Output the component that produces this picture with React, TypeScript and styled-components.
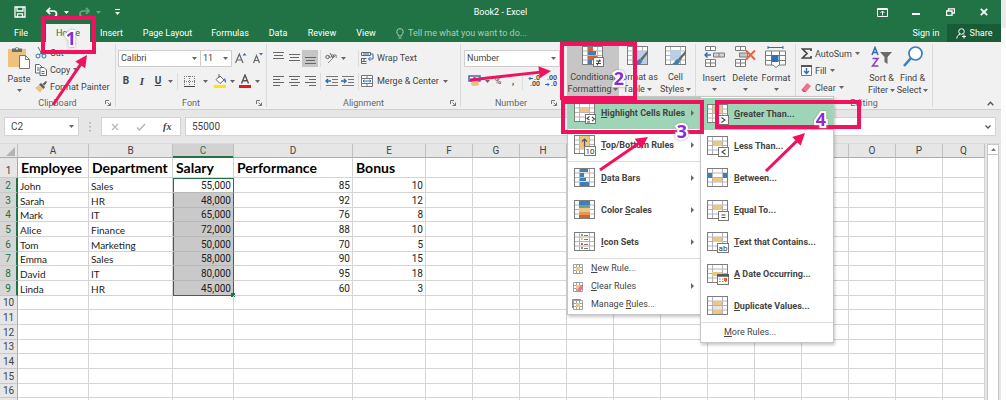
import React from "react";
import styled, { createGlobalStyle, css } from "styled-components";

const GREEN = "#217346";
const PINK = "#f0125f";
const UI_FONT = 'Roboto, "Noto Sans", sans-serif';
const TEXT_FONT = 'Lato, "Open Sans", sans-serif';

const GlobalStyle = createGlobalStyle`
  *, *::before, *::after { box-sizing: border-box; }
  body { margin: 0; overflow: hidden; background: #fafafa; font-family: ${UI_FONT}; font-size: 9px; color: #444; }
  button, input, select { font: inherit; color: inherit; margin: 0; padding: 0; border: 0; background: none; border-radius: 0; }
  svg { display: block; flex: none; }
`;

/* ---------- window frame ---------- */

const Screen = styled.div`
  position: relative;
  height: 100vh;
  padding-right: 5px;
  overflow: hidden;
  background: linear-gradient(#e9ebec 28px, #fdfdfd 28px);
`;

const Window = styled.div`
  height: 100%;
  display: flex;
  flex-direction: column;
  background: #e6e6e6;
`;

const TitleBar = styled.header`
  height: 24px;
  flex: none;
  display: grid;
  grid-template-columns: 1fr auto 1fr;
  align-items: center;
  background: ${GREEN};
  color: #fff;
`;

const QuickAccess = styled.div`
  display: flex;
  align-items: center;
  padding-left: 14px;
`;

const QuickButton = styled.button<{ $dim?: boolean }>`
  width: 32px;
  height: 18px;
  display: flex;
  align-items: center;
  gap: 6px;
  opacity: ${(p) => (p.$dim ? 0.35 : 1)};
`;

const TitleButton = styled.button<{ $w: number }>`
  width: ${(p) => p.$w}px;
  height: 18px;
  display: flex;
  align-items: center;
  justify-content: center;
`;

const WindowButtons = styled.div`
  display: flex;
  justify-content: flex-end;
`;

const TabBar = styled.nav`
  height: 18px;
  flex: none;
  display: flex;
  align-items: stretch;
  background: ${GREEN};
  color: #fff;
`;

const Tab = styled.button<{ $w: number; $active?: boolean }>`
  width: ${(p) => p.$w}px;
  white-space: nowrap;
  text-align: center;
  color: ${(p) => (p.$active ? GREEN : "#fff")};
  background: ${(p) => (p.$active ? "#f1f1f1" : "transparent")};
`;

const FileTab = styled(Tab)`
  padding-right: 4px;
`;

const TellMe = styled.label`
  flex: 1;
  display: flex;
  align-items: center;
  gap: 4px;
  padding-left: 10px;
  color: #a9cdb8;
  input { width: 140px; }
  input::placeholder { color: #a9cdb8; opacity: 1; }
`;

const SignIn = styled.button`
  width: 42px;
`;

const Share = styled.button`
  width: 54px;
  display: flex;
  align-items: center;
  justify-content: center;
  gap: 3px;
  background: #185c37;
`;

/* ---------- ribbon ---------- */

const Ribbon = styled.section`
  flex: none;
  display: flex;
  background: #f1f1f1;
  border-bottom: 1px solid #cfcfcf;
`;

const GroupBox = styled.div<{ $w: number }>`
  width: ${(p) => p.$w}px;
  flex: none;
  border-right: 1px solid #dadada;
  margin: 2px 0;
  display: flex;
  flex-direction: column;
`;

const GroupBody = styled.div<{ $pad: number }>`
  height: 53px;
  padding-left: ${(p) => p.$pad}px;
  display: flex;
`;

const GroupFooter = styled.div`
  height: 10px;
  display: grid;
  grid-template-columns: 10px 1fr 10px;
  align-items: center;
  line-height: 12px;
  text-align: center;
  color: #666;
`;

const Launcher = styled.button`
  grid-column: 3;
  width: 7px;
  height: 8px;
  color: #777;
`;

const Rows = styled.div`
  display: flex;
  flex-direction: column;
  gap: 5px;
  padding-top: 5px;
`;

const ToolRow = styled.div`
  display: flex;
  align-items: center;
  height: 18px;
`;

const Tool = styled.button<{ $w?: number; $on?: boolean }>`
  width: ${(p) => p.$w ?? 16}px;
  height: 17px;
  flex: none;
  display: flex;
  align-items: center;
  justify-content: center;
  background: ${(p) => (p.$on ? "#c6c6c6" : "transparent")};
`;

const TextTool = styled.button`
  height: 17px;
  display: flex;
  align-items: center;
  gap: 3px;
  white-space: nowrap;
`;

const Rule = styled.span`
  width: 1px;
  height: 17px;
  margin: 0 2px;
  background: #dcdcdc;
`;

const Cluster = styled.div<{ $w: number }>`
  width: ${(p) => p.$w}px;
  display: flex;
  align-items: center;
`;

const Letter = styled.span<{ $kind: "b" | "i" | "u" }>`
  font-size: 10px;
  line-height: 12px;
  font-weight: 700;
  ${(p) => p.$kind === "i" && css`font-style: italic; font-family: "Liberation Serif", serif; font-size: 11px;`}
  ${(p) => p.$kind === "u" && css`text-decoration: underline;`}
`;

const SelectBox = styled.label<{ $w: number }>`
  width: ${(p) => p.$w}px;
  height: 17px;
  display: flex;
  align-items: center;
  padding-right: 3px;
  background: #fff;
  border: 1px solid #cdcdcd;
  & + & { margin-left: -1px; }
  select { appearance: none; flex: 1; min-width: 0; height: 15px; padding-left: 2px; outline: none; }
`;

const SmallList = styled.div`
  display: flex;
  flex-direction: column;
  button { height: 17px; }
`;

const BigTool = styled.button<{ $w: number; $on?: boolean }>`
  width: ${(p) => p.$w}px;
  height: 53px;
  flex: none;
  display: flex;
  flex-direction: column;
  align-items: center;
  padding-top: 2px;
  line-height: 12px;
  white-space: nowrap;
  background: ${(p) => (p.$on ? "#c6c6c6" : "transparent")};
  svg { margin-bottom: 4px; }
  svg.caret { margin: 4px 0 0; }
`;

const Line = styled.span`
  display: flex;
  align-items: center;
  gap: 2px;
  svg.caret { margin: 0; }
`;

const Collapse = styled.button`
  align-self: flex-end;
  margin: 0 7px 3px auto;
`;

/* ---------- drop-down menus ---------- */

const MenuAnchor = styled.div`
  position: relative;
`;

const Menu = styled.ul<{ $w: number }>`
  position: absolute;
  z-index: 5;
  top: calc(100% - 1px);
  left: 0;
  width: ${(p) => p.$w}px;
  margin: 0;
  padding: 0 0 1px;
  list-style: none;
  background: #fff;
  border: 1px solid #c6c6c6;
  box-shadow: 1px 2px 3px rgba(0, 0, 0, 0.22);
  & & { top: -1px; left: 100%; padding-top: 1px; z-index: 6; }
`;

const MenuItem = styled.li<{ $divided?: boolean }>`
  position: relative;
  border-top: ${(p) => (p.$divided ? "1px solid #dcdcdc" : "0")};
`;

const MenuButton = styled.button<{ $size: "large" | "small"; $on?: boolean }>`
  width: 100%;
  height: ${(p) => (p.$size === "large" ? 32 : 18)}px;
  display: flex;
  align-items: center;
  padding: 0 6px 0 ${(p) => (p.$size === "large" ? 6 : 4)}px;
  gap: ${(p) => (p.$size === "large" ? 5 : 8)}px;
  font-weight: ${(p) => (p.$size === "large" ? 700 : 400)};
  text-align: left;
  white-space: nowrap;
  background: ${(p) => (p.$on ? "#9fd5b7" : "transparent")};
  span { flex: 1; }
`;

const IconSlot = styled.i`
  width: 11px;
  flex: none;
`;

/* ---------- formula bar ---------- */

const FormulaBar = styled.div`
  flex: none;
  display: flex;
  height: 33px;
  padding: 7px 5px 7px 4px;
`;

const Field = styled.label<{ $w?: number }>`
  ${(p) => (p.$w ? css`width: ${p.$w}px;` : css`flex: 1;`)}
  display: flex;
  align-items: center;
  padding: 0 4px;
  background: #fff;
  border: 1px solid #d4d4d4;
  input { flex: 1; min-width: 0; padding-left: 2px; outline: none; font-size: 10px; }
`;

const Dots = styled.span`
  width: 22px;
  display: flex;
  align-items: center;
  justify-content: center;
`;

const FxButtons = styled.div`
  width: 80px;
  margin-right: 4px;
  display: flex;
  align-items: center;
  justify-content: space-around;
  background: #fff;
  border: 1px solid #d4d4d4;
`;

const Fx = styled.button`
  font: italic 700 10px/14px "Liberation Serif", serif;
`;

/* ---------- sheet ---------- */

const SheetArea = styled.main`
  flex: 1;
  min-height: 0;
  display: flex;
  overflow: hidden;
  border-top: 1px solid #dadada;
  padding-right: 2px;
`;

const GridFrame = styled.div`
  flex: 1;
  min-width: 0;
`;

const Grid = styled.table`
  width: 100%;
  table-layout: fixed;
  border-collapse: separate;
  border-spacing: 0;
  background: #fff;
  font-size: 10px;
  line-height: 12px;
  color: #222;
`;

const ColHead = styled.th<{ $on?: boolean }>`
  height: 14px;
  padding: 0;
  font-weight: 400;
  color: ${(p) => (p.$on ? GREEN : "#444")};
  background: ${(p) => (p.$on ? "#d2d2d2" : "#e6e6e6")};
  border-right: 1px solid #c0c0c0;
  border-bottom: 1px solid ${(p) => (p.$on ? GREEN : "#ababab")};
  ${(p) => p.$on && css`box-shadow: inset 0 -1px ${GREEN};`}
`;

const RowHead = styled.th<{ $on?: boolean }>`
  padding: 0;
  font-weight: 400;
  vertical-align: bottom;
  color: ${(p) => (p.$on ? GREEN : "#444")};
  background: ${(p) => (p.$on ? "#d6d6d6" : "#e6e6e6")};
  border-right: ${(p) => (p.$on ? `2px solid ${GREEN}` : "1px solid #ababab")};
  border-bottom: 1px solid #c8c8c8;
`;

const SheetRow = styled.tr<{ $h: number }>`
  height: ${(p) => p.$h}px;
`;

const Cell = styled.td<{ $num?: boolean; $title?: boolean; $sel?: "first" | "mid" | "last" }>`
  position: relative;
  padding: 0 2px;
  vertical-align: bottom;
  white-space: nowrap;
  font-family: ${(p) => (p.$num ? UI_FONT : TEXT_FONT)};
  text-align: ${(p) => (p.$num ? "right" : "left")};
  border-right: 1px solid #d4d4d4;
  border-bottom: 1px solid #d4d4d4;
  ${(p) => p.$title && css`padding-left: 3px; font-size: 14px; line-height: 18px; font-weight: 700; color: #000;`}
  ${(p) =>
    p.$sel &&
    css`
      background: ${p.$sel === "first" ? "#fff" : "#c9c9c9"};
      border-right-color: ${GREEN};
      border-bottom-color: ${p.$sel === "last" ? GREEN : "#b8b8b8"};
      box-shadow: inset 1px 0 ${GREEN}${p.$sel === "first" ? `, inset 0 1px ${GREEN}` : ""};
    `}
`;

const FillHandle = styled.span`
  position: absolute;
  right: -2px;
  bottom: -2px;
  width: 4px;
  height: 4px;
  background: ${GREEN};
`;

const ScrollBar = styled.div`
  width: 12px;
  flex: none;
  margin-left: 2px;
  background: #fff;
  border: 1px solid #c6c6c6;
  border-bottom: 0;
  button {
    width: 100%;
    height: 10px;
    display: flex;
    align-items: center;
    justify-content: center;
    border-bottom: 1px solid #c6c6c6;
  }
`;

/* ---------- tutorial marks over the window ---------- */

const Marks = styled.div`
  position: absolute;
  inset: 0;
  z-index: 10;
  pointer-events: none;
`;

const Frame = styled.div<{ $x: number; $y: number; $w: number; $h: number }>`
  position: absolute;
  left: ${(p) => p.$x}px;
  top: ${(p) => p.$y}px;
  width: ${(p) => p.$w}px;
  height: ${(p) => p.$h}px;
  border: 4px solid ${PINK};
`;

const Step = styled.b<{ $x: number; $y: number }>`
  position: absolute;
  left: ${(p) => p.$x}px;
  top: ${(p) => p.$y}px;
  width: 16px;
  text-align: center;
  font: 700 18px/20px "Noto Sans", sans-serif;
  color: #8a2bd6;
  -webkit-text-stroke: 4px #fff;
  paint-order: stroke fill;
  filter: drop-shadow(0 0 1px #999);
`;

const ArrowLayer = styled.svg`
  position: absolute;
  inset: 0;
`;

/* ---------- icons ---------- */

const Caret = ({ color = "#666" }: { color?: string }) => (
  <svg className="caret" width="5" height="3" viewBox="0 0 5 3"><path d="M0 0h5L2.5 3z" fill={color} /></svg>
);

const CaretTool = ({ w = 9, name }: { w?: number; name: string }) => (
  <Tool $w={w} aria-label={name}><Caret /></Tool>
);

const SaveIcon = () => (
  <svg width="12" height="12" viewBox="0 0 12 12" fill="none" stroke="#fff" strokeWidth="1.3"><path d="M1 1h10v10H1zM3 1v4h6V1M3.500 11V7.800h5V11" /></svg>
);
const UndoIcon = ({ flip }: { flip?: boolean }) => (
  <svg width="12" height="11" viewBox="0 0 12 11" fill="none" stroke="#fff" strokeWidth="1.7">
    <path d={flip ? "M11 4H5a3 3 0 0 0 0 6M8 .8 11 4 8 7" : "M1 4h6.500a3 3 0 0 1 0 6M4.200.8 1 4l3.200 3.200"} />
  </svg>
);
const LauncherIcon = () => (
  <svg width="6" height="6" viewBox="0 0 6 6" fill="none" stroke="#777"><path d="M.5 4V.5H4M2.500 2.500l3 3M5.500 2.500v3h-3" /></svg>
);
const AlignIcon = ({ rows, y = 0 }: { rows: [number, number][]; y?: number }) => (
  <svg width="11" height="12" viewBox="0 0 11 12">
    {rows.map(([x, w], i) => <rect key={i} x={x} y={y + i * 3} width={w} height="1" fill="#666" />)}
  </svg>
);
const IndentIcon = ({ inward }: { inward?: boolean }) => (
  <svg width="13" height="11" viewBox="0 0 13 11" fill="none" stroke="#777">
    <path d="M1 .5h12M7 3.500h6M7 6.500h6M1 9.500h12" />
    <path d={inward ? "M0 5h5M3 3l2 2-2 2" : "M6 5H1M3 3 1 5l2 2"} stroke="#2f6fb5" strokeWidth="1.500" />
  </svg>
);
const BigPaste = () => (
  <svg width="22" height="23" viewBox="0 0 22 23">
    <rect x="0" y="3" width="18" height="18" fill="#ecc27c" />
    <path d="M4 2.500h3a2.200 2.200 0 0 1 4 0h3V6H4z" fill="#6b6b6b" /><circle cx="9" cy="2.800" r="1" fill="#f1f1f1" />
    <path d="M11.500 9.500h6l4 4v9h-10z" fill="#fff" stroke="#777" /><path d="M17.500 9.500v4h4" fill="none" stroke="#777" />
  </svg>
);
const CutIcon = () => (
  <svg width="12" height="12" viewBox="0 0 12 12" fill="none"><path d="M3 0l4.500 8M9 0 4.500 8" stroke="#666" /><circle cx="3" cy="9" r="2" stroke="#2f6fb5" /><circle cx="9" cy="9" r="2" stroke="#2f6fb5" /></svg>
);
const CopyIcon = () => (
  <svg width="12" height="12" viewBox="0 0 12 12" fill="#fff" stroke="#666"><path d="M.5.5h4L7 3v6H.5z" /><path d="M5 3.500h4L11.500 6v5.500H5z" /><path d="M2 4h2M2 6h2M6.500 7.500h3M6.500 9.500h3" stroke="#2f6fb5" /></svg>
);
const BrushIcon = () => (
  <svg width="12" height="12" viewBox="0 0 12 12"><path d="M0 7l4-3 4 4-3 3.500z" fill="#ecc27c" /><path d="M4 3.500 6 2l4 4-1.500 2zM7.500 3 11 0l1 1-2.500 3.500z" fill="#5c5c5c" /></svg>
);
const GrowIcon = ({ shrink }: { shrink?: boolean }) => (
  <svg width="12" height="12" viewBox="0 0 12 12">
    <path d={shrink ? "M1.500 11 4.500 3.500 7.500 11M2.500 8.500h4" : "M.5 11 4.300 2 8 11M2 8h4.800"} fill="none" stroke="#666" strokeWidth="1.2" />
    <path d={shrink ? "M7 1h4L9 3.500z" : "M7.500 3.500h4L9.500 1z"} fill="#2f6fb5" />
  </svg>
);
const BordersIcon = () => (
  <svg width="11" height="11" viewBox="0 0 11 11" fill="none" stroke="#777"><path d="M0 .5h11M.5 0v10M10.500 0v10M5.500 0v10M0 5.500h11" strokeDasharray="1 1" /><path d="M0 10.500h11" stroke="#444" /></svg>
);
const FillColor = () => (
  <svg width="13" height="14" viewBox="0 0 13 14"><path d="M2 5.500 6 2l4 4-4 3.500z" fill="#fff" stroke="#666" /><path d="M5 0v4" stroke="#666" /><path d="M10 4c2 1 2.500 3 1.500 5C10.500 8 10 6 10 4z" fill="#2f6fb5" /><rect y="11" width="12" height="3" fill="#ffe800" /></svg>
);
const FontColor = () => (
  <svg width="12" height="14" viewBox="0 0 12 14"><path d="M2.500 9.500 6 1l3.500 8.500M3.700 6.800h4.600" fill="none" stroke="#555" strokeWidth="1.4" /><rect y="11" width="12" height="3" fill="#e8171b" /></svg>
);
const OrientIcon = () => (
  <svg width="13" height="12" viewBox="0 0 13 12" fill="none" stroke="#666"><path d="M3 11 11 3M8 3h3.200v3" stroke="#888" /><circle cx="2.500" cy="5" r="1.700" /><path d="M4 3.500 5.500 6M5 1l3 5" /><circle cx="7.500" cy="4" r="1.200" /></svg>
);
const WrapIcon = () => (
  <svg width="13" height="12" viewBox="0 0 13 12" fill="none" stroke="#666"><path d="M.5.5h9v3h-9zM.5 6.500h5M.5 9.500h5M.5 6v5.500h5" /><path d="M2 2h6M2 8h2" stroke="#2f6fb5" /><path d="M9 2h3v5H7.500M9.500 5l-2 2 2 2" stroke="#2f6fb5" /></svg>
);
const MergeIcon = () => (
  <svg width="13" height="12" viewBox="0 0 13 12" fill="#fff" stroke="#777"><path d="M.5.5h11v11H.5zM.5 3.500h11M.5 8.500h11M6 .5v3M6 8.500v3" /><path d="M2 6h8M3.500 4.800 2 6l1.500 1.200M8.500 4.800 10 6 8.500 7.200" fill="none" stroke="#2f6fb5" /></svg>
);
const CurrencyIcon = () => (
  <svg width="13" height="12" viewBox="0 0 13 12"><rect x="1" y="1" width="11" height="5" fill="#fff" stroke="#2f6fb5" strokeWidth="1.5" /><circle cx="6.500" cy="3.500" r="1.500" fill="#2f6fb5" /><ellipse cx="7" cy="8.500" rx="4" ry="2.500" fill="#ecc27c" /></svg>
);
const Decimal = styled.span`
  position: relative;
  display: block;
  width: 12px;
  font-size: 7px;
  line-height: 6px;
  font-weight: 600;
  text-align: right;
  white-space: pre-line;
`;
const DecimalArrow = styled.svg<{ $low?: boolean }>`
  position: absolute;
  left: 0;
  top: ${(p) => (p.$low ? 7 : 1)}px;
`;
const DecimalIcon = ({ less }: { less?: boolean }) => (
  <Decimal>
    {less ? ".00\n.0" : ".0\n.00"}
    <DecimalArrow $low={less} width="5" height="5" viewBox="0 0 5 5" fill="none" stroke="#2f6fb5">
      <path d={less ? "M0 2.500h4M2.500 1 4 2.500 2.500 4" : "M5 2.500H1M2.500 1 1 2.500 2.500 4"} />
    </DecimalArrow>
  </Decimal>
);

/* A small worksheet with coloured blocks, shared by the style buttons and the menu entries. */
type Block = [number, number, number, number, string];
const MiniSheet = ({ blocks = [], children }: { blocks?: Block[]; children?: React.ReactNode }) => (
  <svg width="22" height="21" viewBox="0 0 22 21">
    <rect x=".5" y=".5" width="20" height="18" fill="#fff" />
    <path d="M.5 5h20M.5 9.500h20M.5 14h20M5.500.5v18M15.500.5v18" stroke="#b4b4b4" fill="none" />
    {blocks.map(([x, y, w, h, c], i) => <rect key={i} x={x} y={y} width={w} height={h} fill={c} />)}
    <rect x=".5" y=".5" width="20" height="18" fill="none" stroke="#7c7c7c" />
    {children}
  </svg>
);
const Badge = ({ d }: { d: string }) => (
  <g><rect x="11.500" y="11.500" width="10" height="9" fill="#fff" stroke="#777" /><path d={d} fill="none" stroke="#444" strokeWidth="1.1" /></g>
);
const BadgeText = ({ children }: { children: string }) => (
  <g><rect x="10.500" y="11.500" width="11" height="9" fill="#fff" stroke="#777" /><text x="16" y="19" fontSize="8" fontWeight="400" textAnchor="middle" fill="#333">{children}</text></g>
);
const SAND = "#ecc684";
const BLUE = "#3f7fb5";
const RED = "#d9603b";

const BrushOver = () => (
  <g><path d="M21 4 13 13l2 2 6-8z" fill="#6a6a6a" /><path d="M13 13c-3 0-3 4-6 5 4 2 8 0 8-3z" fill="#3f7fb5" /></g>
);
const InsertCells = () => (
  <svg width="21" height="22" viewBox="0 0 21 22" fill="#fff" stroke="#7c7c7c"><path d="M1.500.5h10v4h-10zM6.500.5v4M1.500 13.500h10v7h-10zM6.500 13.500v7M1.500 17h10" /><path d="M9.500 7h11v4h-11zM15 7v4" fill="#d4d4d4" /><path d="M7 9H1M3.500 6.500 1 9l2.500 2.500" fill="none" stroke="#2f6fb5" strokeWidth="1.5" /></svg>
);
const DeleteCells = () => (
  <svg width="22" height="22" viewBox="0 0 22 22" fill="#fff" stroke="#7c7c7c"><path d="M1.500.5h10v4h-10zM6.500.5v4M1.500 13.500h10v7h-10zM6.500 13.500v7M1.500 17h10" /><path d="M5.500 7h8v4h-8z" fill="#c8c8c8" /><path d="M12 4.500l9 9M21 4.500l-9 9" stroke="#e0663f" strokeWidth="2" /></svg>
);
const FormatCells = () => (
  <svg width="22" height="22" viewBox="0 0 22 22" fill="#fff" stroke="#7c7c7c"><path d="M.5 5h20v14H14l-3 2.500-3-2.500H.5zM.5 9.500h20M.5 14.500h20M6.500 5v14M14.500 5v14" /><path d="M6.500 9h7v7h-7z" fill="#2f6fb5" stroke="none" /><path d="M3 1.500h15M3 0v3M18 0v3" stroke="#2f6fb5" /></svg>
);
const SumIcon = () => <svg width="11" height="11" viewBox="0 0 11 11" fill="none" stroke="#444" strokeWidth="1.7"><path d="M10 3V1H1.500L6 5.500 1.500 10H10V8" /></svg>;
const FillIcon = () => <svg width="11" height="11" viewBox="0 0 11 11" fill="#fff" stroke="#777"><path d="M.5.5h10v10H.5z" /><path d="M0 1h11" stroke="#555" strokeWidth="2" /><path d="M5.500 3v5.500M3 6l2.500 2.500L8 6" fill="none" stroke="#2f6fb5" strokeWidth="1.5" /></svg>;
const EraserIcon = () => <svg width="11" height="11" viewBox="0 0 11 11"><path d="M1 7 6 1l4 3-5 6H2.500z" fill="#e2788f" /><path d="M1 7l4 3H2.500L.5 8z" fill="#b9506a" /></svg>;
const SortIcon = () => (
  <svg width="22" height="22" viewBox="0 0 22 22" fill="none"><path d="M1 9 4 1.500 7 9M2 6.500h4" stroke="#2f6fb5" strokeWidth="1.5" /><path d="M1.500 12.500h5.500L1.500 20h6" stroke="#8b3fbf" strokeWidth="1.5" /><path d="M9 6h12l-4.500 5v7l-3-2v-5z" fill="#6a6a6a" /></svg>
);
const FindIcon = () => (
  <svg width="22" height="22" viewBox="0 0 22 22" fill="none"><circle cx="13.500" cy="7.500" r="6.500" stroke="#3c7cc0" strokeWidth="1.7" fill="#fff" /><path d="M9 12 2 20" stroke="#3c7cc0" strokeWidth="2.500" /></svg>
);
const MiniRule = ({ kind }: { kind: "new" | "clear" | "manage" }) => (
  <svg width="11" height="11" viewBox="0 0 11 11" fill="#fff" stroke="#8a8a8a">
    {kind === "manage" && <path d="M.5 9V.5H9" fill="none" />}
    <path d="M1.500 1.500h9v9h-9zM1.500 4.500h9M1.500 7.500h9M4.500 1.500v9M7.500 1.500v9" strokeWidth=".8" />
    <rect x="4" y="4" width="4" height="4" fill={SAND} stroke="none" />
    {kind === "clear" && <path d="M5 9 9 4l2.500 2L8 11H6z" fill="#e2788f" stroke="none" />}
  </svg>
);

/* ---------- pieces ---------- */

function Group({ w, pad, label, launcher, children }: { w: number; pad: number; label: string; launcher?: boolean; children: React.ReactNode }) {
  return (
    <GroupBox $w={w}>
      <GroupBody $pad={pad}>{children}</GroupBody>
      <GroupFooter>
        <i />
        <span>{label}</span>
        {launcher && <Launcher aria-label={`${label} settings`}><LauncherIcon /></Launcher>}
      </GroupFooter>
    </GroupBox>
  );
}

function Select({ w, value, name }: { w: number; value: string; name: string }) {
  return (
    <SelectBox $w={w}>
      <select aria-label={name} defaultValue={value}><option>{value}</option></select>
      <Caret />
    </SelectBox>
  );
}

/* Labels mark their access key with an underscore before the letter. */
function AccessLabel({ text }: { text: string }) {
  const at = text.indexOf("_");
  return <span>{text.slice(0, at)}<u>{text[at + 1]}</u>{text.slice(at + 2)}</span>;
}

const Arrow = () => <svg width="3" height="6" viewBox="0 0 3 6"><path d="M0 0l3 3-3 3z" fill="#666" /></svg>;

const comparisons: { text: string; icon: React.ReactNode }[] = [
  { text: "_Greater Than...", icon: <MiniSheet blocks={[[6, 1, 9, 8, SAND]]}><Badge d="M14.500 13.500 18 16l-3.500 2.500" /></MiniSheet> },
  { text: "_Less Than...", icon: <MiniSheet blocks={[[6, 5, 9, 5, SAND]]}><Badge d="M18.500 13.500 15 16l3.500 2.500" /></MiniSheet> },
  { text: "_Between...", icon: <MiniSheet blocks={[[1, 5, 4, 5, BLUE], [16, 5, 4, 5, BLUE], [6, 10, 9, 4, SAND]]} /> },
  { text: "_Equal To...", icon: <MiniSheet blocks={[[6, 5, 9, 5, SAND]]}><Badge d="M14.500 15h4M14.500 17.500h4" /></MiniSheet> },
  { text: "_Text that Contains...", icon: <MiniSheet blocks={[[6, 5, 9, 5, SAND]]}><BadgeText>ab</BadgeText></MiniSheet> },
  {
    text: "_A Date Occurring...",
    icon: (
      <MiniSheet blocks={[[5, 8, 10, 4, SAND]]}>
        <rect x="10.500" y="10.500" width="11" height="10" fill="#fff" stroke="#777" />
        <path d="M10 11.500h12" stroke="#555" strokeWidth="2.500" />
        <path d="M12 15h8M12 17.500h8" stroke="#888" strokeDasharray="1.500 1.500" /><rect x="17" y="14" width="3" height="3" fill={RED} />
      </MiniSheet>
    ),
  },
  { text: "_Duplicate Values...", icon: <MiniSheet blocks={[[6, 5, 9, 4, SAND], [6, 14, 9, 4, SAND], [6, 10, 9, 3, "#e4e4e4"]]} /> },
];

const ruleKinds: { text: string; divided?: boolean; icon: React.ReactNode }[] = [
  { text: "_Top/Bottom Rules", icon: <MiniSheet blocks={[[6, 1, 9, 13, SAND]]}><path d="M10.500 12V4M8 6.500 10.500 4 13 6.500" fill="none" stroke="#555" strokeWidth="1.200" /><BadgeText>10</BadgeText></MiniSheet> },
  { text: "_Data Bars", divided: true, icon: <MiniSheet blocks={[[6, 1, 8, 3, BLUE], [6, 5, 4, 4, BLUE], [6, 10, 6, 3, BLUE], [6, 14, 9, 4, BLUE]]} /> },
  { text: "Color _Scales", icon: <MiniSheet blocks={[[5, 1, 11, 4, BLUE], [5, 5, 11, 3, "#69a58c"], [5, 8, 11, 4, SAND], [5, 12, 11, 3, "#e59a49"], [5, 15, 11, 3, RED]]} /> },
  { text: "_Icon Sets", icon: <MiniSheet blocks={[[7, 2, 2, 2, "#69a58c"], [7, 6, 2, 2, SAND], [7, 11, 2, 2, RED], [7, 15, 2, 2, "#69a58c"], [10, 3, 4, 1, "#777"], [10, 7, 4, 1, "#777"], [10, 12, 4, 1, "#777"], [10, 16, 4, 1, "#777"]]} /> },
];

function ConditionalMenu() {
  return (
    <Menu $w={134}>
      <MenuItem>
        <MenuButton $size="large" $on>
          <MiniSheet blocks={[[6, 4, 9, 5, SAND]]}><Badge d="M15.500 13.500 13 15.500l2.500 1.500M13 19h3M18 14l2.500 2-2.500 2" /></MiniSheet>
          <AccessLabel text="_Highlight Cells Rules" /><Arrow />
        </MenuButton>
        <Menu $w={134}>
          {comparisons.map((c, i) => (
            <MenuItem key={c.text}>
              <MenuButton $size="large" $on={i === 0}>{c.icon}<AccessLabel text={c.text} /></MenuButton>
            </MenuItem>
          ))}
          <MenuItem $divided>
            <MenuButton $size="small"><IconSlot /><AccessLabel text="_More Rules..." /></MenuButton>
          </MenuItem>
        </Menu>
      </MenuItem>
      {ruleKinds.map((r) => (
        <MenuItem key={r.text} $divided={r.divided}>
          <MenuButton $size="large">{r.icon}<AccessLabel text={r.text} /><Arrow /></MenuButton>
        </MenuItem>
      ))}
      <MenuItem $divided><MenuButton $size="small"><MiniRule kind="new" /><AccessLabel text="_New Rule..." /></MenuButton></MenuItem>
      <MenuItem><MenuButton $size="small"><MiniRule kind="clear" /><AccessLabel text="_Clear Rules" /><Arrow /></MenuButton></MenuItem>
      <MenuItem><MenuButton $size="small"><MiniRule kind="manage" /><AccessLabel text="Manage _Rules..." /></MenuButton></MenuItem>
    </Menu>
  );
}

const columns: [string, number | null][] = [
  ["A", 71], ["B", 84], ["C", 61], ["D", 119], ["E", 73],
  ..."FGHIJKLMNOP".split("").map((c): [string, number] => [c, 47]),
  ["Q", null],
];

const people: [string, string, string, string, string][] = [
  ["John", "Sales", "55,000", "85", "10"],
  ["Sarah", "HR", "48,000", "92", "12"],
  ["Mark", "IT", "65,000", "76", "8"],
  ["Alice", "Finance", "72,000", "88", "10"],
  ["Tom", "Marketing", "50,000", "70", "5"],
  ["Emma", "Sales", "58,000", "90", "15"],
  ["David", "IT", "80,000", "95", "18"],
  ["Linda", "HR", "45,000", "60", "3"],
];
const titles = ["Employee", "Department", "Salary", "Performance", "Bonus"];

function Sheet() {
  return (
    <SheetArea>
      <GridFrame>
        <Grid>
          <colgroup>
            <col style={{ width: 18 }} />
            {columns.map(([name, w]) => <col key={name} style={w ? { width: w } : undefined} />)}
          </colgroup>
          <thead>
            <tr>
              <ColHead aria-label="Select all"><svg width="17" height="12" viewBox="0 0 17 12"><path d="M15 2v9H6z" fill="#b4b4b4" /></svg></ColHead>
              {columns.map(([name]) => <ColHead key={name} $on={name === "C"}>{name}</ColHead>)}
            </tr>
          </thead>
          <tbody>
            <SheetRow $h={20}>
              <RowHead>1</RowHead>
              {columns.map(([name], c) => <Cell key={name} $title>{titles[c]}</Cell>)}
            </SheetRow>
            {Array.from({ length: 16 }, (_, r) => (
              <SheetRow key={r} $h={r % 3 === 2 ? 14 : 15}>
                <RowHead $on={r < 8}>{r + 2}</RowHead>
                {columns.map(([name], c) => (
                  <Cell key={name} $num={c > 1} $sel={c === 2 && r < 8 ? (r === 0 ? "first" : r === 7 ? "last" : "mid") : undefined}>
                    {people[r]?.[c]}
                    {c === 2 && r === 7 && <FillHandle />}
                  </Cell>
                ))}
              </SheetRow>
            ))}
          </tbody>
        </Grid>
      </GridFrame>
      <ScrollBar><button aria-label="Scroll up"><svg width="5" height="3" viewBox="0 0 5 3"><path d="M0 3h5L2.500 0z" fill="#777" /></svg></button></ScrollBar>
    </SheetArea>
  );
}

const tabs: [string, number][] = [["Insert", 43], ["Page Layout", 69], ["Formulas", 56], ["Data", 40], ["Review", 48], ["View", 40]];

/* tail x, tail y, tip x, tip y */
const arrows: [number, number, number, number][] = [
  [53, 105, 87, 55],
  [470, 80, 551, 71],
  [600, 170, 648, 137],
  [766, 171, 805, 133],
];

function PinkArrow({ a }: { a: [number, number, number, number] }) {
  const [x1, y1, x2, y2] = a;
  const len = Math.hypot(x2 - x1, y2 - y1);
  const angle = (Math.atan2(y2 - y1, x2 - x1) * 180) / Math.PI;
  return (
    <g transform={`translate(${x1} ${y1}) rotate(${angle})`} fill={PINK}>
      <rect y="-1.5" width={len - 8} height="3" />
      <path d={`M${len} 0l-12-6v12z`} />
    </g>
  );
}

export default function App() {
  return (
    <Screen>
      <GlobalStyle />
      <Window>
        <TitleBar>
          <QuickAccess>
            <QuickButton aria-label="Save"><SaveIcon /></QuickButton>
            <QuickButton aria-label="Undo"><UndoIcon /><Caret color="#fff" /></QuickButton>
            <QuickButton $dim aria-label="Redo"><UndoIcon flip /><Caret color="#fff" /></QuickButton>
            <TitleButton $w={14} aria-label="Customize toolbar"><svg width="5" height="6" viewBox="0 0 5 6" fill="#fff"><path d="M0 0h5v1H0zM0 3h5L2.500 6z" /></svg></TitleButton>
          </QuickAccess>
          <span>Book2 - Excel</span>
          <WindowButtons>
            <TitleButton $w={34} aria-label="Ribbon display options"><svg width="11" height="9" viewBox="0 0 11 9" fill="none" stroke="#fff"><path d="M.5.5h10v8H.5zM0 1.500h11M5.500 7.500v-4M3.500 5l2-2 2 2" /></svg></TitleButton>
            <TitleButton $w={34} aria-label="Minimize"><svg width="8" height="6" viewBox="0 0 8 6"><path d="M0 4h8v2H0z" fill="#fff" /></svg></TitleButton>
            <TitleButton $w={34} aria-label="Restore"><svg width="9" height="8" viewBox="0 0 9 8" fill="none" stroke="#fff"><path d="M.5 3h5.500v4.500H.5zM2.500 3V.8h6V5H6" strokeWidth="1.300" /></svg></TitleButton>
            <TitleButton $w={34} aria-label="Close"><svg width="8" height="8" viewBox="0 0 8 8"><path d="M.8.8l6.400 6.400M7.200.8.8 7.200" stroke="#fff" strokeWidth="1.800" /></svg></TitleButton>
          </WindowButtons>
        </TitleBar>
        <TabBar>
          <FileTab $w={46}>File</FileTab>
          <Tab $w={44} $active>Home</Tab>
          {tabs.map(([name, w]) => <Tab key={name} $w={w}>{name}</Tab>)}
          <TellMe>
            <svg width="8" height="11" viewBox="0 0 8 11" fill="none" stroke="#a9cdb8"><path d="M2.500 8C2.500 6.500.8 5.800.8 3.800a3.200 3.200 0 0 1 6.400 0c0 2-1.700 2.700-1.700 4.200zM2.500 10h3" /></svg>
            <input aria-label="Tell me" placeholder="Tell me what you want to do..." />
          </TellMe>
          <SignIn>Sign in</SignIn>
          <Share>
            <svg width="11" height="11" viewBox="0 0 11 11" fill="none" stroke="#fff"><circle cx="5.500" cy="3.500" r="2.800" /><path d="M.7 10.500C1 8 2.500 6.500 4 6.300M8 6.500v4M6 8.500h4" /></svg>
            Share
          </Share>
        </TabBar>

        <Ribbon>
          <Group w={116} pad={3} label="Clipboard" launcher>
            <BigTool $w={32}><BigPaste />Paste<Caret /></BigTool>
            <SmallList>
              <TextTool><CutIcon />Cut</TextTool>
              <TextTool><CopyIcon />Copy <Caret /></TextTool>
              <TextTool><BrushIcon />Format Painter</TextTool>
            </SmallList>
          </Group>

          <Group w={151} pad={2} label="Font" launcher>
            <Rows>
              <ToolRow>
                <Select w={83} value="Calibri" name="Font" /><Select w={32} value="11" name="Font size" />
                <Tool $w={18} aria-label="Grow font"><GrowIcon /></Tool><Tool aria-label="Shrink font"><GrowIcon shrink /></Tool>
              </ToolRow>
              <ToolRow>
                <Tool><Letter $kind="b">B</Letter></Tool><Tool><Letter $kind="i">I</Letter></Tool><Tool><Letter $kind="u">U</Letter></Tool>
                <CaretTool name="Underline styles" /><Rule />
                <Tool $w={18} aria-label="Borders"><BordersIcon /></Tool><CaretTool w={14} name="Border styles" />
                <Tool aria-label="Fill color"><FillColor /></Tool><CaretTool name="Fill colors" />
                <Tool aria-label="Font color"><FontColor /></Tool><CaretTool name="Font colors" />
              </ToolRow>
            </Rows>
          </Group>

          <Group w={194} pad={3} label="Alignment" launcher>
            <Rows>
              <ToolRow>
                <Tool aria-label="Top align"><AlignIcon rows={[[0, 11], [1, 9], [0, 11]]} /></Tool>
                <Tool aria-label="Middle align"><AlignIcon rows={[[0, 11], [1, 9], [0, 11]]} y={2} /></Tool>
                <Tool $on aria-label="Bottom align"><AlignIcon rows={[[0, 11], [1, 9], [0, 11]]} y={5} /></Tool>
                <Rule />
                <Cluster $w={33}><Tool aria-label="Orientation"><OrientIcon /></Tool><CaretTool name="Orientations" /></Cluster>
                <Rule />
                <TextTool><WrapIcon />Wrap Text</TextTool>
              </ToolRow>
              <ToolRow>
                <Tool aria-label="Align left"><AlignIcon rows={[[0, 11], [0, 7], [0, 11], [0, 7]]} y={1} /></Tool>
                <Tool aria-label="Center"><AlignIcon rows={[[0, 11], [2, 7], [0, 11], [2, 7]]} y={1} /></Tool>
                <Tool aria-label="Align right"><AlignIcon rows={[[0, 11], [4, 7], [0, 11], [4, 7]]} y={1} /></Tool>
                <Rule />
                <Cluster $w={33}><Tool aria-label="Decrease indent"><IndentIcon /></Tool><Tool aria-label="Increase indent"><IndentIcon inward /></Tool></Cluster>
                <Rule />
                <TextTool><MergeIcon />Merge &amp; Center</TextTool><CaretTool w={14} name="Merge options" />
              </ToolRow>
            </Rows>
          </Group>

          <Group w={101} pad={3} label="Number" launcher>
            <Rows>
              <ToolRow><Select w={96} value="Number" name="Number format" /></ToolRow>
              <ToolRow>
                <Tool $w={20} aria-label="Currency"><CurrencyIcon /></Tool><CaretTool w={6} name="Currencies" />
                <Tool>%</Tool><Tool $w={14}><b>,</b></Tool><Rule />
                <Tool $w={18} aria-label="Increase decimal"><DecimalIcon /></Tool><Tool aria-label="Decrease decimal"><DecimalIcon less /></Tool>
              </ToolRow>
            </Rows>
          </Group>

          <Group w={134} pad={5} label="Styles">
            <MenuAnchor>
              <BigTool $w={52} $on>
                <MiniSheet blocks={[[6, 1, 5, 4, RED], [6, 5, 8, 4, BLUE], [6, 10, 9, 4, RED], [6, 14, 4, 4, BLUE]]}><Badge d="M14 15h5M14 17.500h5M18 13.500l-3 6" /></MiniSheet>
                <Line>Conditional</Line><Line>Formatting<Caret /></Line>
              </BigTool>
              <ConditionalMenu />
            </MenuAnchor>
            <BigTool $w={37}><MiniSheet blocks={[[6, 5, 14, 13, "#b9cfe6"]]}><BrushOver /></MiniSheet><Line>Format as</Line><Line>Table<Caret /></Line></BigTool>
            <BigTool $w={39}><MiniSheet blocks={[[5, 4, 11, 10, "#b9cfe6"]]}><BrushOver /></MiniSheet><Line>Cell</Line><Line>Styles<Caret /></Line></BigTool>
          </Group>

          <Group w={100} pad={3} label="Cells">
            <BigTool $w={30}><InsertCells />Insert<Caret /></BigTool>
            <BigTool $w={32}><DeleteCells />Delete<Caret /></BigTool>
            <BigTool $w={30}><FormatCells />Format<Caret /></BigTool>
          </Group>

          <Group w={137} pad={5} label="Editing">
            <Cluster $w={65}>
              <SmallList>
                <TextTool><SumIcon />AutoSum <Caret /></TextTool>
                <TextTool><FillIcon />Fill <Caret /></TextTool>
                <TextTool><EraserIcon />Clear <Caret /></TextTool>
              </SmallList>
            </Cluster>
            <BigTool $w={31}><SortIcon /><Line>Sort &amp;</Line><Line>Filter<Caret /></Line></BigTool>
            <BigTool $w={31}><FindIcon /><Line>Find &amp;</Line><Line>Select<Caret /></Line></BigTool>
          </Group>
          <Collapse aria-label="Collapse the ribbon"><svg width="7" height="5" viewBox="0 0 7 5"><path d="M.7 4.300 3.500 1.300l2.800 3" fill="none" stroke="#555" strokeWidth="1.300" /></svg></Collapse>
        </Ribbon>

        <FormulaBar>
          <Field $w={75}><input aria-label="Name box" defaultValue="C2" /><Caret /></Field>
          <Dots><svg width="2" height="10" viewBox="0 0 2 10"><path d="M1 0v10" stroke="#aaa" strokeWidth="1.500" strokeDasharray="1.500 2.500" /></svg></Dots>
          <FxButtons>
            <button aria-label="Cancel"><svg width="8" height="8" viewBox="0 0 8 8"><path d="M1 1l6 6M7 1 1 7" stroke="#b8b8b8" strokeWidth="1.200" /></svg></button>
            <button aria-label="Enter"><svg width="10" height="8" viewBox="0 0 10 8"><path d="M1 4.500 3.500 7 9 1" fill="none" stroke="#b8b8b8" strokeWidth="1.500" /></svg></button>
            <Fx>fx</Fx>
          </FxButtons>
          <Field>
            <input aria-label="Formula" defaultValue="55000" />
            <svg width="6" height="4" viewBox="0 0 6 4"><path d="M.5.5 3 3 5.500.5" fill="none" stroke="#555" strokeWidth="1.300" /></svg>
          </Field>
        </FormulaBar>

        <Sheet />
      </Window>

      <Marks aria-hidden="true">
        <Frame $x={41} $y={16} $w={55} $h={38} />
        <Frame $x={560} $y={42} $w={77} $h={58} />
        <Frame $x={561} $y={100} $w={143} $h={34} />
        <Frame $x={715} $y={100} $w={146} $h={29} />
        <ArrowLayer width="100%" height="100%">{arrows.map((a, i) => <PinkArrow key={i} a={a} />)}</ArrowLayer>
        <Step $x={63} $y={28}>1</Step>
        <Step $x={611} $y={68}>2</Step>
        <Step $x={674} $y={121}>3</Step>
        <Step $x={813} $y={109}>4</Step>
      </Marks>
    </Screen>
  );
}
